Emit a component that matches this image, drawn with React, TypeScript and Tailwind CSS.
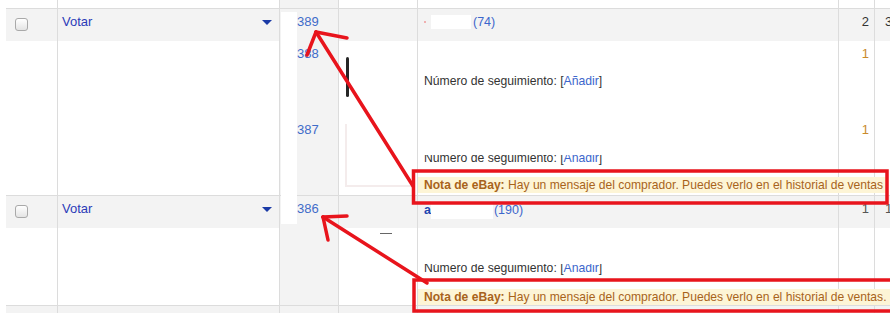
import React from "react";

const COLS = ["w-[51px]", "w-[222px]", "w-[59px]", "w-[79px]", "w-[421px]", "w-[36px]", "flex-1"];

function Row({ cls, band, cells }: { cls: string; band?: boolean; cells: React.ReactNode[] }) {
  return (
    <div className={`flex ${cls} ${band ? "bg-[#f3f3f3]" : ""}`}>
      {cells.map((c, i) => (
        <div
          key={i}
          className={`relative shrink-0 ${COLS[i]} ${i > 0 ? "border-l border-[#dcdcdc]" : ""} ${i === 2 ? "bg-[#f3f3f3]" : ""}`}
        >
          {c}
        </div>
      ))}
    </div>
  );
}

const Checkbox = () => (
  <div className="ml-[9px] mt-[9px] h-[13px] w-[13px] rounded-[3px] border border-[#a9a9a9] bg-gradient-to-b from-white to-[#e4e4e4]" />
);

const Votar = () => (
  <div className="flex items-start justify-between pl-[4px] pr-[7px] pt-[5px]">
    <span className="leading-[16px] text-[#2b3bb8]">Votar</span>
    <span className="mt-[6px] h-0 w-0 border-l-[5px] border-r-[5px] border-t-[5px] border-l-transparent border-r-transparent border-t-[#1a3aa6]" />
  </div>
);

const Tracking = () => (
  <span className="text-[#333]">
    Número de seguimiento: [<span className="text-[#3c66cc]">Añadir</span>]
  </span>
);

const Note = ({ dot }: { dot?: boolean }) => (
  <div className="relative z-10 w-max whitespace-nowrap bg-[#fdf5d6] pl-[6px] pr-[3px] text-[12.1px] leading-[16px] text-[#a8631b]">
    <b>Nota de eBay:</b> Hay un mensaje del comprador. Puedes verlo en el historial de ventas{dot ? "." : ""}
  </div>
);

export default function App() {
  return (
    <div className="relative h-[313px] w-[890px] overflow-hidden bg-white font-['Liberation_Sans',Arial,sans-serif] text-[13px]">
      <div className="pl-[6px]">
        {/* tail of the previous order */}
        <Row cls="h-[8px]" cells={[null, null, null, null, null, null, null]} />

        {/* order 1 */}
        <Row
          cls="h-[33px] border-t border-[#dcdcdc]"
          band
          cells={[
            <Checkbox />,
            <Votar />,
            <div className="pl-[17px] pt-[5px] leading-[16px] text-[#3f6cc9]">389</div>,
            null,
            <div className="flex items-center pl-[6px] pt-[5px] text-[12.5px] leading-[16px]">
              <span className="h-[2px] w-[2px] bg-[#f0b0b0]" />
              <span className="ml-[5px] inline-block h-[14px] w-[40px] bg-white" />
              <span className="ml-[2px] text-[#3c66cc]">(74)</span>
            </div>,
            <div className="pr-[5px] pt-[5px] text-right leading-[16px] text-[#333]">2</div>,
            <div className="pl-[10px] pt-[5px] leading-[16px] text-[#333]">3</div>,
          ]}
        />
        <Row
          cls="h-[154px]"
          cells={[
            null,
            null,
            <div className="pl-[17px] pt-[5px] leading-[16px] text-[#3f6cc9]">
              <div>388</div>
              <div className="mt-[60px]">387</div>
            </div>,
            <div className="pl-[6px] pt-[16px]">
              <div className="ml-[1px] h-[40px] w-[3px] rounded-[2px] bg-[#262626]" />
              <div className="mt-[27px] h-[63px] w-[66px] border-b-2 border-l-2 border-[#f4ecec]" />
            </div>,
            <div className="flex flex-col text-[12.2px]">
              <div className="h-[32px]" />
              <div className="pl-[6px] leading-[16px]">
                <Tracking />
              </div>
              <div className="h-[66px]" />
              <div className="h-[10px] overflow-hidden pl-[6px]">
                <div className="-mt-[4px] leading-[15px]">
                  <Tracking />
                </div>
              </div>
              <div className="h-[12px]" />
              <Note />
            </div>,
            <div className="pr-[5px] pt-[5px] text-right leading-[16px] text-[#c98a2b]">
              <div>1</div>
              <div className="mt-[60px]">1</div>
            </div>,
            null,
          ]}
        />

        {/* order 2 */}
        <Row
          cls="h-[33px] border-t border-[#dcdcdc]"
          band
          cells={[
            <Checkbox />,
            <Votar />,
            <div className="pl-[17px] pt-[5px] leading-[16px] text-[#3f6cc9]">386</div>,
            null,
            <div className="flex items-center pl-[6px] pt-[5px] text-[12.5px] leading-[16px]">
              <b className="text-[#1e45b0]">a</b>
              <span className="inline-block h-[18px] w-[62px] bg-white" />
              <span className="ml-[1px] text-[#3c66cc]">(190)</span>
            </div>,
            <div className="pr-[5px] pt-[5px] text-right leading-[16px] text-[#555]">1</div>,
            <div className="pl-[10px] pt-[5px] leading-[16px] text-[#555]">1</div>,
          ]}
        />
        <Row
          cls="h-[77px]"
          cells={[
            null,
            null,
            null,
            <div className="ml-[41px] mt-[5px] h-[1px] w-[12px] bg-[#666]" />,
            <div className="flex flex-col text-[12.2px]">
              <div className="h-[36px]" />
              <div className="h-[12px] overflow-hidden pl-[6px]">
                <div className="-mt-[3px] leading-[15px]">
                  <Tracking />
                </div>
              </div>
              <div className="h-[13px]" />
              <Note dot />
            </div>,
            null,
            null,
          ]}
        />
        <Row cls="h-[8px] border-t border-[#dcdcdc]" band cells={[null, null, null, null, null, null, null]} />
      </div>

      {/* redaction over the order numbers */}
      <div className="absolute left-[281px] top-[12px] h-[212px] w-[16px] bg-white" />

      {/* red annotations */}
      <svg className="pointer-events-none absolute left-0 top-0 z-20" width="890" height="313" viewBox="0 0 890 313">
        <g stroke="#e8141c" fill="none" strokeLinecap="round">
          <rect x="413.5" y="171" width="473.5" height="32" strokeWidth="3.5" />
          <rect x="414" y="280" width="490" height="31" strokeWidth="3.5" />
          <line x1="316" y1="32" x2="413" y2="186" strokeWidth="3.5" />
          <line x1="316" y1="32" x2="347" y2="38" strokeWidth="3.5" />
          <line x1="316" y1="32" x2="307" y2="55" strokeWidth="3.5" />
          <line x1="323" y1="217" x2="427" y2="283" strokeWidth="3.5" />
          <line x1="323" y1="217" x2="347" y2="216" strokeWidth="3.5" />
          <line x1="323" y1="217" x2="328" y2="240" strokeWidth="3.5" />
        </g>
      </svg>
    </div>
  );
}
